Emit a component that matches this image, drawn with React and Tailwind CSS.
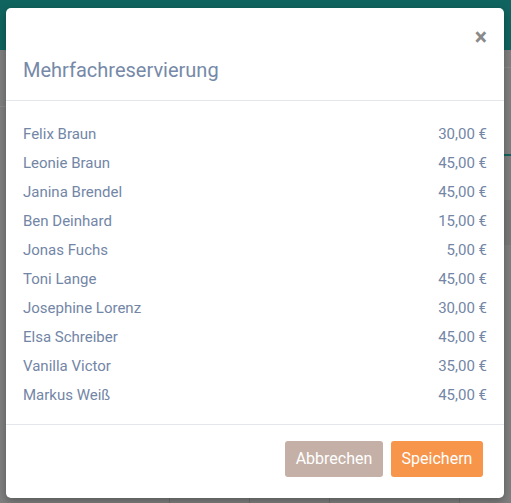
import React from "react";

const rows = [
  ["Felix Braun", "30,00 €"],
  ["Leonie Braun", "45,00 €"],
  ["Janina Brendel", "45,00 €"],
  ["Ben Deinhard", "15,00 €"],
  ["Jonas Fuchs", "5,00 €"],
  ["Toni Lange", "45,00 €"],
  ["Josephine Lorenz", "30,00 €"],
  ["Elsa Schreiber", "45,00 €"],
  ["Vanilla Victor", "35,00 €"],
  ["Markus Weiß", "45,00 €"],
];

export default function App() {
  return (
    <div
      className="relative w-[511px] h-[503px] overflow-hidden bg-[#7f7f7f]"
      style={{ fontFamily: "Roboto, 'Noto Sans', sans-serif" }}
    >
      {/* page behind overlay */}
      <div className="h-[50px] bg-[#10645f]" />
      <div className="flex justify-between">
        <div className="w-[6px]">
          <div className="h-[57px] border-b border-[#8a8a8a]" />
        </div>
        <div className="w-[7px]">
          <div className="h-[18px] border-b border-[#8a8a8a]" />
          <div className="h-[88px] border-b-2 border-[#10645f]" />
          <div className="h-[44px]" />
          <div className="h-[45px] bg-[#797979]" />
        </div>
      </div>
      <div className="absolute bottom-0 left-0 right-0 h-[6px] flex">
        <div className="w-[170px] border-r border-[#6f6f6f]" />
        <div className="w-[80px] border-r border-[#6f6f6f]" />
        <div className="w-[80px] border-r border-[#6f6f6f]" />
        <div className="w-[130px] border-r border-[#6f6f6f]" />
      </div>

      {/* modal */}
      <div className="absolute left-[6px] top-[8px] w-[498px] h-[490px] bg-white rounded-[5px] shadow-[0_3px_9px_rgba(0,0,0,0.3)] flex flex-col">
        <div className="px-[17px] pt-[19px] pb-[16px] border-b border-[#e3e6ea]">
          <div className="flex justify-end h-[20px] items-center">
            <span className="text-[#8a8a8a] text-[23px] font-bold leading-none">×</span>
          </div>
          <div className="mt-[9px] text-[20px] leading-[28px] text-[#7689a8]">
            Mehrfachreservierung
          </div>
        </div>
        <div className="px-[17px] pt-[19px] pb-[14px] border-b border-[#e3e6ea]">
          {rows.map(([n, p]) => (
            <div key={n} className="flex justify-between items-center h-[29px] text-[15px] text-[#7386a6]">
              <span>{n}</span>
              <span>{p}</span>
            </div>
          ))}
        </div>
        <div className="flex justify-end gap-[8px] pt-[16px] pr-[21px]">
          <button className="w-[98px] h-[36px] rounded-[3px] bg-[#c4b0a6] text-white text-[16px]">
            Abbrechen
          </button>
          <button className="w-[92px] h-[36px] rounded-[3px] bg-[#f7954a] text-white text-[16px]">
            Speichern
          </button>
        </div>
      </div>
    </div>
  );
}
